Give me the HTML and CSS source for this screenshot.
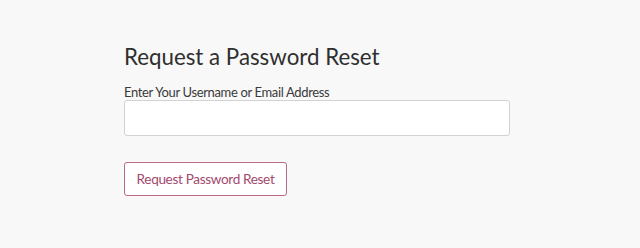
FILE: index.html
```html
<!DOCTYPE html>
<html>
<head>
<meta charset="utf-8">
<link rel="stylesheet" href="styles.css">
</head>
<body>
<main class="page">
  <h1 class="title">Request a Password Reset</h1>
  <form class="form">
    <label class="label" for="user">Enter Your Username or Email Address</label>
    <input class="input" id="user" type="text">
    <button class="btn" type="button">Request Password Reset</button>
  </form>
</main>
</body>
</html>
```
FILE: styles.css
```css
html, body {
  margin: 0;
  padding: 0;
  background: #f8f8f8;
}
body {
  font-family: Lato, "Open Sans", sans-serif;
  color: #333;
}
.page {
  padding: 42px 0 0 124px;
  width: 386px;
}
.title {
  margin: 0;
  font-size: 22.3px;
  font-weight: 400;
  line-height: 30px;
  color: #2f2f2f;
}
.form {
  display: flex;
  flex-direction: column;
  margin-top: 13px;
}
.label {
  font-size: 13px;
  line-height: 15px;
  color: #3a3a3a;
  letter-spacing: -0.35px;
}
.input {
  box-sizing: border-box;
  height: 36px;
  width: 386px;
  margin: 0;
  border: 1px solid #d2d2d2;
  border-radius: 3px;
  background: #fff;
}
.btn {
  align-self: flex-start;
  box-sizing: border-box;
  margin-top: 26px;
  height: 34px;
  width: 163px;
  padding: 0;
  border: 1px solid #b9688a;
  border-radius: 3px;
  background: #fff;
  color: #a3496e;
  font-family: Lato, "Open Sans", sans-serif;
  font-size: 13.6px;
  letter-spacing: -0.35px;
}
```
